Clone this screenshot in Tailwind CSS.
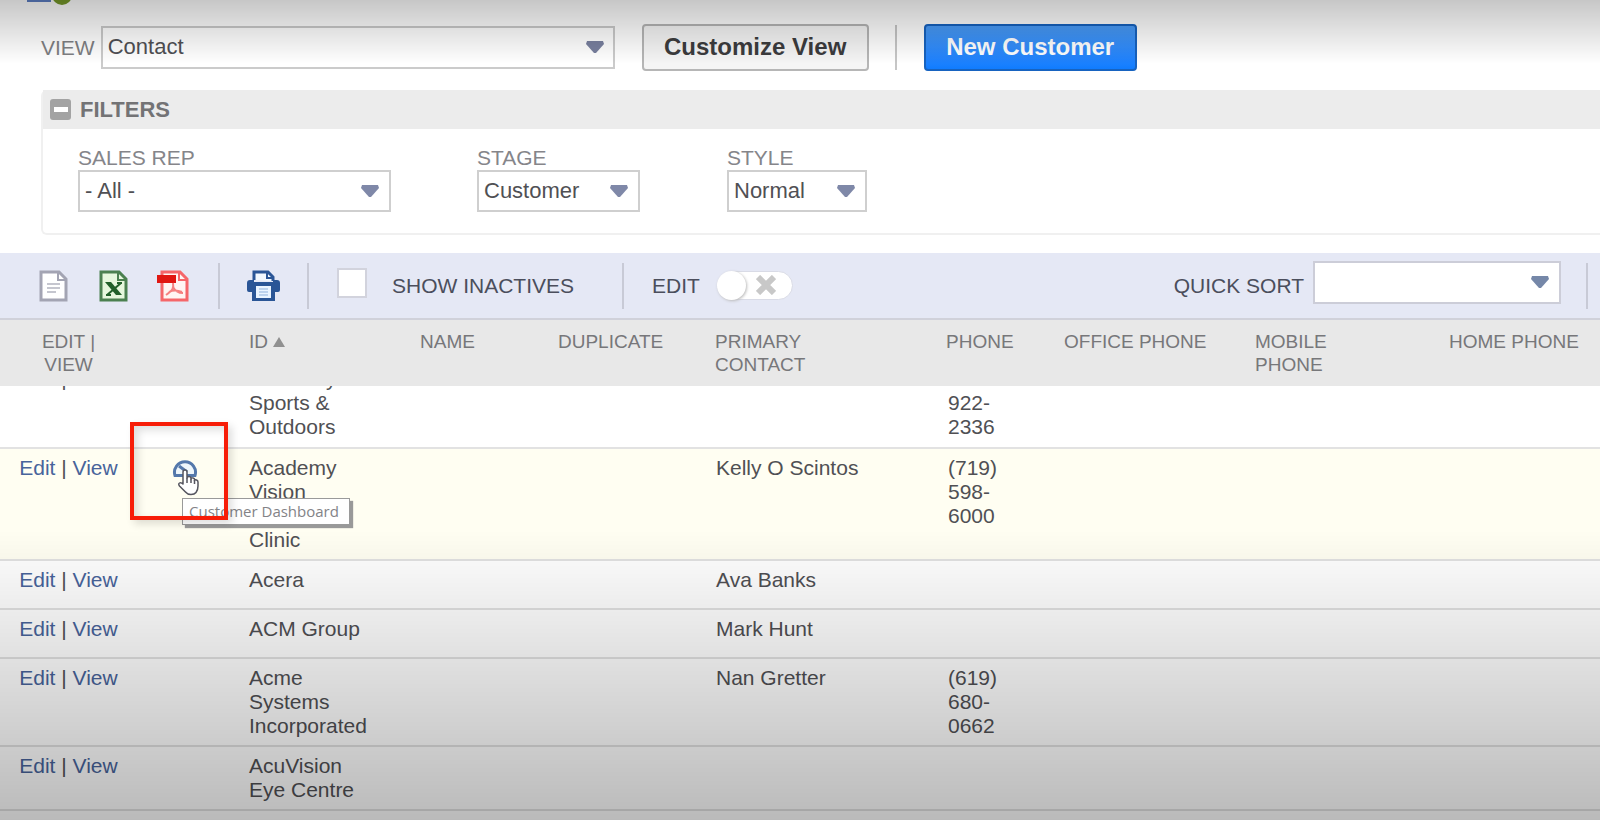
<!DOCTYPE html>
<html lang="en">
<head>
  <meta charset="UTF-8" />
  <meta name="viewport" content="width=device-width, initial-scale=1.0"/>
  <title>Customers</title>
  <script src="https://cdn.jsdelivr.net/npm/@tailwindcss/browser@4"></script>
</head>
<body class="h-screen flex flex-col overflow-hidden bg-white text-[#505054] font-['Liberation_Sans',Arial,sans-serif]">

  <!-- Top bar -->
  <header class="relative flex items-center pt-6 pb-[19px] pl-[41px]">
    <svg class="absolute left-[26px] top-0" width="48" height="6" viewBox="0 0 48 6">
      <rect x="1" y="0" width="24" height="2" fill="#5d7fc4"/>
      <circle cx="36" cy="-5" r="10" fill="#76992a"/>
    </svg>
    <label for="view" class="text-[21px] text-[#7f7f83] mr-[6px]">VIEW</label>
    <div class="relative">
      <select id="view" class="appearance-none block w-[514px] h-[43px] pl-[5px] pb-[2px] text-[22px] bg-white border-2 border-[#cbcbcb] rounded-none">
        <option>Contact</option>
      </select>
      <svg class="absolute right-[10px] top-[14px] pointer-events-none" width="20" height="14" viewBox="0 0 20 14"><path d="M2 1h16l1 3-8 9h-2L1 4z" fill="#79809f"/></svg>
    </div>
    <button class="ml-[27px] w-[227px] h-[47px] pb-[2px] text-[24px] font-bold text-[#3c3c3e] bg-[#f5f5f5] border-2 border-[#b6b6b6] rounded-[4px]">Customize View</button>
    <div class="ml-[26px] mr-[27px] w-[2px] h-[45px] bg-[#c6c6c6]"></div>
    <button class="w-[213px] h-[47px] pb-[2px] text-[24px] font-bold text-white bg-linear-to-b from-[#4a9cf8] to-[#0f7cff] border-2 border-[#1763c0] rounded-[4px]">New Customer</button>
  </header>

  <!-- Filters -->
  <section class="ml-[41px] mb-[18px] border-l-2 border-b-2 border-[#f0f0f0] rounded-l-[6px]">
    <div class="flex items-center h-[39px] pl-[7px] bg-[#ececec]">
      <button aria-label="Collapse filters" class="mr-[9px]">
        <svg width="21" height="21" viewBox="0 0 21 21"><rect width="21" height="21" rx="3" fill="#a3a3a3"/><rect x="4" y="8" width="14" height="5" fill="#fff"/></svg>
      </button>
      <h2 class="text-[22px] font-bold text-[#737375]">FILTERS</h2>
    </div>
    <div class="flex pl-[35px] pt-4 pb-[21px]">
      <div class="mr-[86px]">
        <label for="rep" class="block text-[21px] leading-[25px] text-[#85858a]">SALES REP</label>
        <div class="relative">
          <select id="rep" class="appearance-none block w-[313px] h-[42px] pl-[5px] pb-[2px] text-[22px] bg-white border-2 border-[#cfcfcf] rounded-none">
            <option>- All -</option>
          </select>
          <svg class="absolute right-[11px] top-[14px] pointer-events-none" width="20" height="14" viewBox="0 0 20 14"><path d="M2 1h16l1 3-8 9h-2L1 4z" fill="#7f88a8"/></svg>
        </div>
      </div>
      <div class="mr-[87px]">
        <label for="stage" class="block text-[21px] leading-[25px] text-[#85858a]">STAGE</label>
        <div class="relative">
          <select id="stage" class="appearance-none block w-[163px] h-[42px] pl-[5px] pb-[2px] text-[22px] bg-white border-2 border-[#cfcfcf] rounded-none">
            <option>Customer</option>
          </select>
          <svg class="absolute right-[11px] top-[14px] pointer-events-none" width="20" height="14" viewBox="0 0 20 14"><path d="M2 1h16l1 3-8 9h-2L1 4z" fill="#7f88a8"/></svg>
        </div>
      </div>
      <div>
        <label for="style" class="block text-[21px] leading-[25px] text-[#85858a]">STYLE</label>
        <div class="relative">
          <select id="style" class="appearance-none block w-[140px] h-[42px] pl-[5px] pb-[2px] text-[22px] bg-white border-2 border-[#cfcfcf] rounded-none">
            <option>Normal</option>
          </select>
          <svg class="absolute right-[11px] top-[14px] pointer-events-none" width="20" height="14" viewBox="0 0 20 14"><path d="M2 1h16l1 3-8 9h-2L1 4z" fill="#7f88a8"/></svg>
        </div>
      </div>
    </div>
  </section>

  <!-- List toolbar -->
  <div class="flex items-center h-[67px] shrink-0 pl-[39px] pr-3 bg-[#e5e8f5] border-b-2 border-[#d0d1da] text-[21px] text-[#4b4e5c]">
    <button aria-label="Export CSV" class="mr-[31px]">
      <svg width="29" height="32" viewBox="0 0 29 32">
        <path d="M2 2h18l7 7v21H2z" fill="#fff" stroke="#a3a4b3" stroke-width="3"/>
        <path d="M19 3v7h7" fill="none" stroke="#a3a4b3" stroke-width="2"/>
        <path d="M8 14h13M8 18h13M8 22h9" stroke="#c5c6cf" stroke-width="2"/>
      </svg>
    </button>
    <button aria-label="Export Excel" class="mr-[29px]">
      <svg width="29" height="32" viewBox="0 0 29 32">
        <path d="M2 2h18l7 7v21H2z" fill="#e6f7dd" stroke="#4b8050" stroke-width="3"/>
        <path d="M19 3v7h7" fill="none" stroke="#4b8050" stroke-width="2"/>
        <path d="M6 12h6l11 13h-6z" fill="#22602a"/>
        <path d="M22 13L8 25M18 13h5M7 25h5" stroke="#22602a" stroke-width="2"/>
      </svg>
    </button>
    <button aria-label="Export PDF" class="mr-[28px]">
      <svg width="33" height="32" viewBox="0 0 33 32">
        <path d="M5 2h18l7 7v21H5z" fill="#fff5f3" stroke="#f5666a" stroke-width="3"/>
        <path d="M22 3v7h7" fill="none" stroke="#f5666a" stroke-width="2"/>
        <rect x="0" y="5" width="19" height="8" fill="#e01712"/>
        <path d="M16 13c1 5 0 7-7 12M16 17c2 4 5 6 10 6M12 22c4-2 8-2 13 0" fill="none" stroke="#f58080" stroke-width="2"/>
      </svg>
    </button>
    <div class="w-[2px] h-[46px] bg-[#c8cad6]"></div>
    <button aria-label="Print" class="ml-[27px] mr-[27px]">
      <svg width="33" height="32" viewBox="0 0 33 32">
        <path d="M7 10V2h14l5 5v4" fill="#f2f8ff" stroke="#2a5596" stroke-width="3"/>
        <path d="M20 2v6h6" fill="none" stroke="#2a5596" stroke-width="2"/>
        <path d="M3 10h4v2h19v-2h4q3 0 3 3v7q0 2-2 2h-3v9H5v-9H2q-2 0-2-2v-7q0-3 3-3z" fill="#2a5596"/>
        <rect x="9" y="16" width="15" height="12" fill="#eaf4ff"/>
        <path d="M12 19h9M12 22h9M12 25h9" stroke="#8fb1dc" stroke-width="1"/>
      </svg>
    </button>
    <div class="w-[2px] h-[46px] bg-[#c8cad6]"></div>
    <input id="inactives" type="checkbox" class="appearance-none ml-[28px] mr-[25px] mb-[6px] w-[30px] h-[30px] bg-white border-2 border-[#d2d3dd]"/>
    <label for="inactives">SHOW INACTIVES</label>
    <div class="ml-[48px] mr-[28px] w-[2px] h-[46px] bg-[#c8cad6]"></div>
    <label for="edit" class="mr-[17px]">EDIT</label>
    <div class="relative">
      <input id="edit" type="checkbox" role="switch" class="appearance-none block w-[76px] h-[29px] rounded-full bg-white border border-[#d9dbe6]"/>
      <span class="absolute left-0 top-0 size-[29px] rounded-full bg-white shadow-[1px_1px_3px_#bbbbbb] pointer-events-none"></span>
      <svg class="absolute right-[17px] top-[4px] pointer-events-none" width="20" height="20" viewBox="0 0 20 20"><path d="M2 2l16 16M18 2L2 18" stroke="#c8c8c8" stroke-width="6"/></svg>
    </div>
    <label for="sort" class="ml-auto mr-[9px]">QUICK SORT</label>
    <div class="relative mb-[6px]">
      <select id="sort" class="appearance-none block w-[248px] h-[43px] bg-white border-2 border-[#cccdd8] rounded-none">
        <option></option>
      </select>
      <svg class="absolute right-[11px] top-[14px] pointer-events-none" width="20" height="14" viewBox="0 0 20 14"><path d="M2 1h16l1 3-8 9h-2L1 4z" fill="#7587a8"/></svg>
    </div>
    <div class="ml-[25px] w-[2px] h-[46px] bg-[#c8cad6]"></div>
  </div>

  <!-- Customer list: the first row is partly scrolled under the sticky header -->
  <main class="flex-1 min-h-0 overflow-hidden">
    <table class="w-full table-fixed border-separate border-spacing-0 text-left text-[21px] leading-[24px]">
      <thead class="sticky top-0 z-20 text-[19px] leading-[23px] text-[#77777a]">
        <tr class="align-top bg-[#e8e8e8]">
          <th class="w-[137px] py-[10px] font-normal text-center">EDIT |<br>VIEW</th>
          <th class="w-[95px]"></th>
          <th class="w-[171px] py-[10px] pl-[17px] font-normal">ID <svg class="inline mb-[2px]" width="12" height="10" viewBox="0 0 12 10"><path d="M6 0l6 10H0z" fill="#909090"/></svg></th>
          <th class="w-[138px] py-[10px] pl-[17px] font-normal">NAME</th>
          <th class="w-[157px] py-[10px] pl-[17px] font-normal">DUPLICATE</th>
          <th class="w-[231px] py-[10px] pl-[17px] font-normal">PRIMARY<br>CONTACT</th>
          <th class="w-[118px] py-[10px] pl-[17px] font-normal">PHONE</th>
          <th class="w-[191px] py-[10px] pl-[17px] font-normal">OFFICE PHONE</th>
          <th class="w-[194px] py-[10px] pl-[17px] font-normal">MOBILE<br>PHONE</th>
          <th class="py-[10px] pl-[17px] font-normal">HOME PHONE</th>
        </tr>
      </thead>
      <tbody class="align-top">
        <tr>
          <td class="pb-2 text-center border-b-2 border-[#e2e2e2]"><div class="-mt-[19px]"><a href="#" class="text-[#48649b]">Edit</a> | <a href="#" class="text-[#48649b]">View</a></div></td>
          <td class="border-b-2 border-[#e2e2e2]"></td>
          <td class="pb-2 pl-[17px] border-b-2 border-[#e2e2e2]"><div class="-mt-[19px]">Academy<br>Sports &amp;<br>Outdoors</div></td>
          <td class="border-b-2 border-[#e2e2e2]" colspan="3"></td>
          <td class="pb-2 pl-[19px] border-b-2 border-[#e2e2e2]"><div class="-mt-[19px]">970-<br>922-<br>2336</div></td>
          <td class="border-b-2 border-[#e2e2e2]" colspan="3"></td>
        </tr>
        <tr class="bg-[#fffef2]">
          <td class="pt-[7px] pb-[7px] text-center border-b-2 border-[#e2e2e2]"><a href="#" class="text-[#48649b]">Edit</a> | <a href="#" class="text-[#48649b]">View</a></td>
          <td class="relative z-10 pt-[10px] border-b-2 border-[#e2e2e2]">
            <a href="#" aria-label="Customer Dashboard" class="block">
              <svg class="mx-auto" width="26" height="20" viewBox="0 0 26 20">
                <path d="M3 16.500a10.500 10.500 0 1 1 20 0z" fill="#eef6fb" stroke="#5478ab" stroke-width="3"/>
                <path d="M7 7l8 6" stroke="#5478ab" stroke-width="3"/>
              </svg>
            </a>
            <!-- tooltip -->
            <div role="tooltip" class="absolute left-[45px] top-[49px] w-[168px] h-[27px] pl-[6px] whitespace-nowrap bg-white border border-[#9a9a9a] shadow-[3px_3px_1px_#999999] font-['Open_Sans',sans-serif] text-[15px] leading-[25px] text-[#838387]">Customer Dashboard</div>
            <!-- highlight box -->
            <div class="absolute left-[-7px] top-[-27px] size-[98px] border-[4px] border-[#f71d08] shadow-[4px_4px_8px_#00000022,inset_4px_4px_8px_#00000022] pointer-events-none"></div>
            <!-- hand pointer -->
            <svg class="absolute left-[40px] top-[20px] pointer-events-none" width="22" height="27" viewBox="0 0 22 27">
              <path d="M6 15V3q0-2 2-2t2 2v6q0-1.500 2-1.500t2 2v.5q0-1.500 2-1t1.500 2v.5q.5-1 2-.5t1.500 2v4q0 4-2 6.500-1.500 2-5 2t-5.500-2.500L2.500 17q-1.500-2 0-3T6 15z" fill="#fff" stroke="#55555f" stroke-width="1.500" stroke-linejoin="round"/>
              <path d="M10 9v5M14 10v4M17.500 11v4" stroke="#55555f" stroke-width="1.500"/>
            </svg>
          </td>
          <td class="pt-[7px] pb-[7px] pl-[17px] border-b-2 border-[#e2e2e2]">Academy<br>Vision<br><br>Clinic</td>
          <td class="border-b-2 border-[#e2e2e2]" colspan="2"></td>
          <td class="pt-[7px] pb-[7px] pl-[18px] border-b-2 border-[#e2e2e2]">Kelly O Scintos</td>
          <td class="pt-[7px] pb-[7px] pl-[19px] border-b-2 border-[#e2e2e2]">(719)<br>598-<br>6000</td>
          <td class="border-b-2 border-[#e2e2e2]" colspan="3"></td>
        </tr>
        <tr class="h-[49px]">
          <td class="pt-[7px] pb-[7px] text-center border-b-2 border-[#e2e2e2]"><a href="#" class="text-[#48649b]">Edit</a> | <a href="#" class="text-[#48649b]">View</a></td>
          <td class="border-b-2 border-[#e2e2e2]"></td>
          <td class="pt-[7px] pb-[7px] pl-[17px] border-b-2 border-[#e2e2e2]">Acera</td>
          <td class="border-b-2 border-[#e2e2e2]" colspan="2"></td>
          <td class="pt-[7px] pb-[7px] pl-[18px] border-b-2 border-[#e2e2e2]">Ava Banks</td>
          <td class="border-b-2 border-[#e2e2e2]" colspan="4"></td>
        </tr>
        <tr class="h-[49px]">
          <td class="pt-[7px] pb-[7px] text-center border-b-2 border-[#e2e2e2]"><a href="#" class="text-[#48649b]">Edit</a> | <a href="#" class="text-[#48649b]">View</a></td>
          <td class="border-b-2 border-[#e2e2e2]"></td>
          <td class="pt-[7px] pb-[7px] pl-[17px] border-b-2 border-[#e2e2e2]">ACM Group</td>
          <td class="border-b-2 border-[#e2e2e2]" colspan="2"></td>
          <td class="pt-[7px] pb-[7px] pl-[18px] border-b-2 border-[#e2e2e2]">Mark Hunt</td>
          <td class="border-b-2 border-[#e2e2e2]" colspan="4"></td>
        </tr>
        <tr>
          <td class="pt-[7px] pb-[7px] text-center border-b-2 border-[#e2e2e2]"><a href="#" class="text-[#48649b]">Edit</a> | <a href="#" class="text-[#48649b]">View</a></td>
          <td class="border-b-2 border-[#e2e2e2]"></td>
          <td class="pt-[7px] pb-[7px] pl-[17px] border-b-2 border-[#e2e2e2]">Acme<br>Systems<br>Incorporated</td>
          <td class="border-b-2 border-[#e2e2e2]" colspan="2"></td>
          <td class="pt-[7px] pb-[7px] pl-[18px] border-b-2 border-[#e2e2e2]">Nan Gretter</td>
          <td class="pt-[7px] pb-[7px] pl-[19px] border-b-2 border-[#e2e2e2]">(619)<br>680-<br>0662</td>
          <td class="border-b-2 border-[#e2e2e2]" colspan="3"></td>
        </tr>
        <tr>
          <td class="pt-[7px] pb-[7px] text-center border-b-2 border-[#e2e2e2]"><a href="#" class="text-[#48649b]">Edit</a> | <a href="#" class="text-[#48649b]">View</a></td>
          <td class="border-b-2 border-[#e2e2e2]"></td>
          <td class="pt-[7px] pb-[7px] pl-[17px] border-b-2 border-[#e2e2e2]">AcuVision<br>Eye Centre</td>
          <td class="border-b-2 border-[#e2e2e2]" colspan="7"></td>
        </tr>
      </tbody>
    </table>
  </main>

  <!-- Shading at the top and bottom edges -->
  <div class="fixed inset-x-0 top-0 z-30 h-16 bg-linear-to-b from-black/22 to-transparent pointer-events-none"></div>
  <div class="fixed inset-x-0 bottom-0 z-30 h-[290px] bg-linear-to-t from-black/27 to-transparent pointer-events-none"></div>

</body>
</html>
